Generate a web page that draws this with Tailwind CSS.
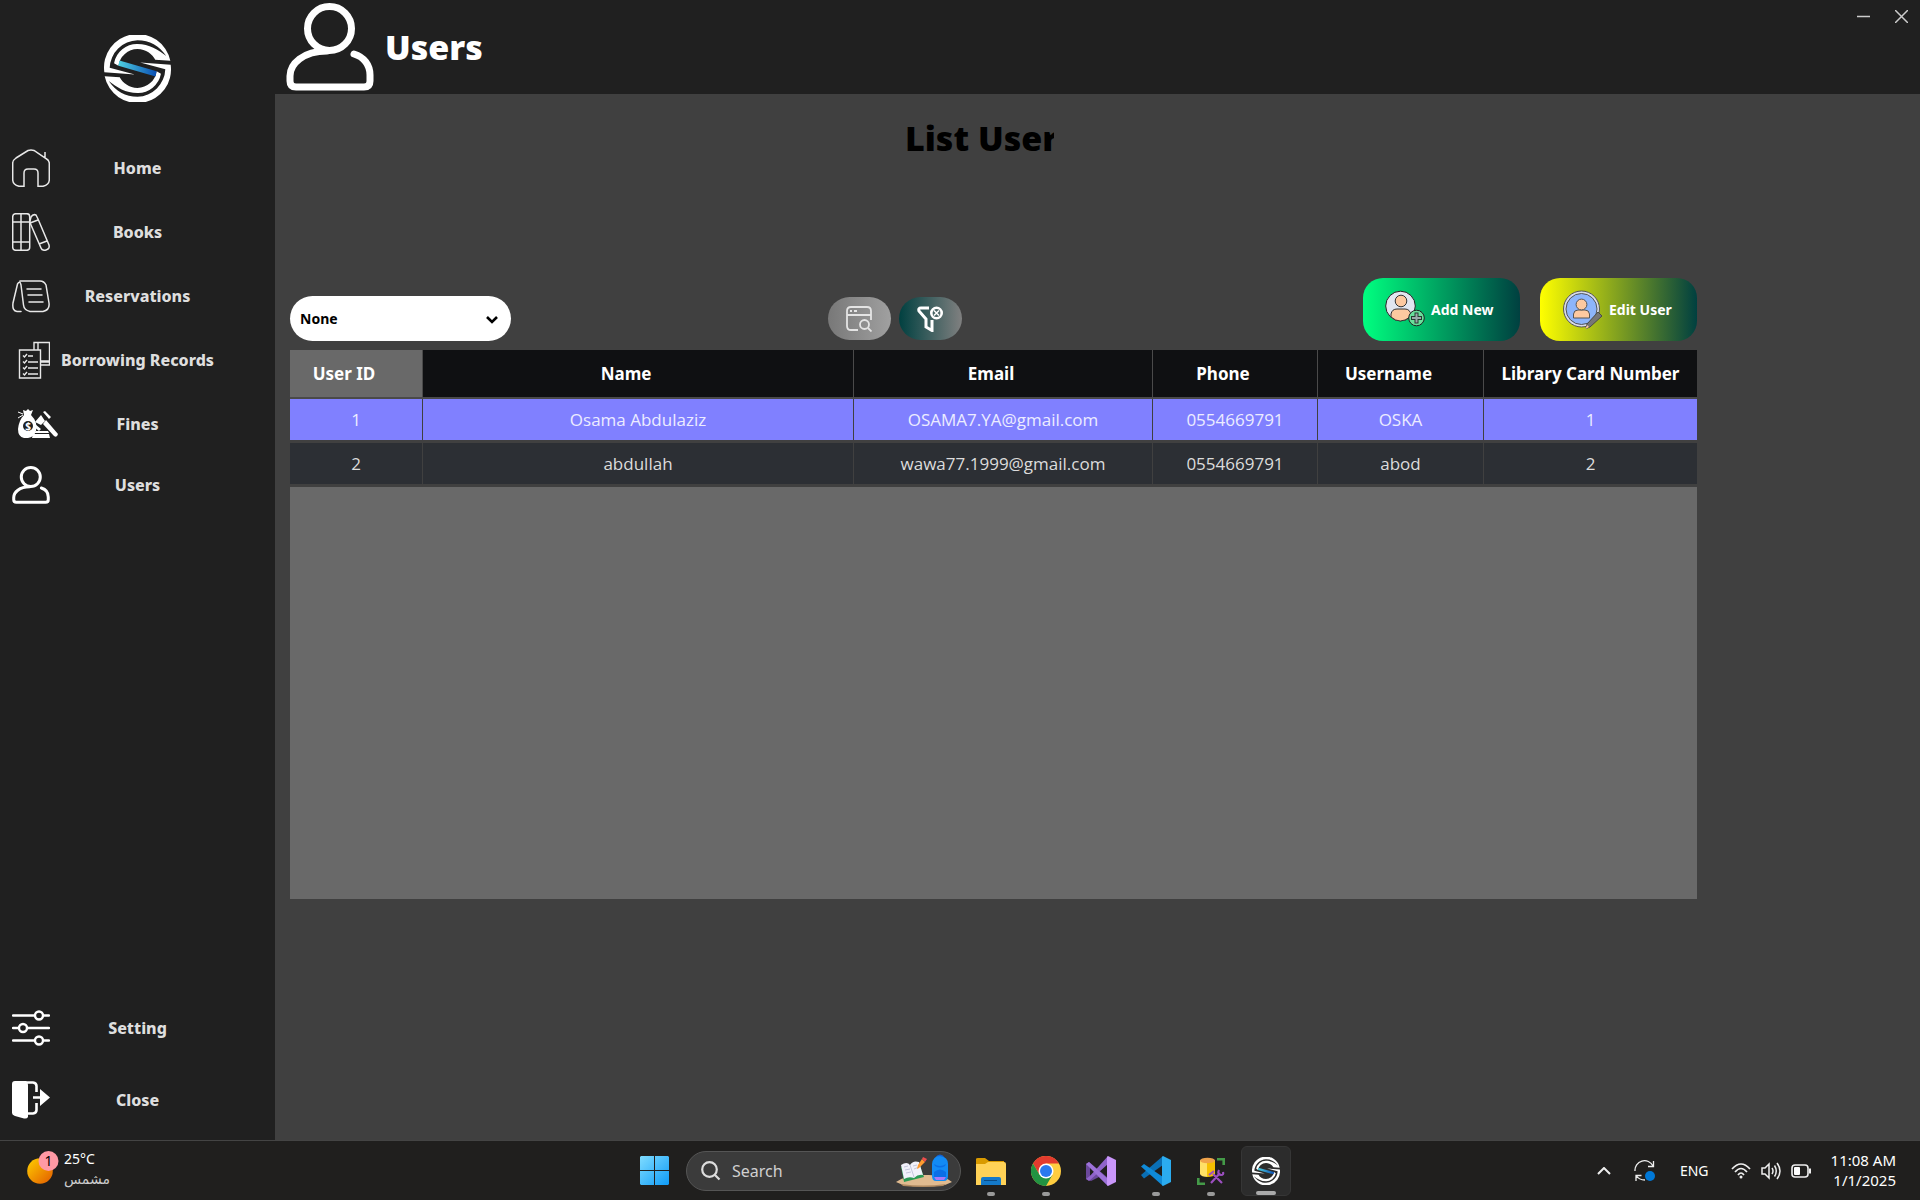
<!DOCTYPE html>
<html lang="en">
<head>
<meta charset="utf-8">
<title>Library - Users</title>
<script src="https://cdn.jsdelivr.net/npm/@tailwindcss/browser@4"></script>
</head>
<body class="flex min-h-screen flex-col bg-[#404040] font-['Noto_Sans','Open_Sans',sans-serif] text-white">

<svg class="absolute size-0" aria-hidden="true">
  <defs>
    <linearGradient id="band" x1="0" x2="1"><stop offset="0" stop-color="#4fd0e0"/><stop offset="1" stop-color="#0a4fb5"/></linearGradient>
    <path id="half" d="M1 111A100 100 0 0 1 198 77L153 74C145 58 125 42 100 42A58 58 0 0 0 43 92L30 84A70 70 0 0 1 100 27C135 27 162 44 186 63C165 33 136 16 100 16A85 85 0 0 0 17 98L92 118Z"/>
    <symbol id="logo" viewBox="0 0 200 200">
      <use href="#half" fill="#fff"/><use href="#half" fill="#fff" transform="rotate(180 100 100)"/>
      <path fill="url(#band)" d="M46 76L157 108L154 124L43 92Z"/>
    </symbol>
    <symbol id="user" viewBox="0 0 88 88">
      <g fill="none" stroke="#fff" stroke-width="7" stroke-linecap="round" stroke-linejoin="round"><circle cx="43.500" cy="25.500" r="22"/><path d="M41 48C17 48 4 61 4 73V78Q4 84 10 84H78Q84 84 84 78V72C84 62 78 54 68 51"/></g>
    </symbol>
  </defs>
</svg>

<div class="flex flex-1">
  <nav class="flex w-[275px] shrink-0 flex-col bg-[#202020] pb-1 text-[16px] font-extrabold text-[#dedede]">
    <div class="flex h-[136px] items-center justify-center"><svg class="size-[67px]"><use href="#logo"/></svg></div>

    <button class="grid h-16 grid-cols-[50px_1fr_50px] items-center">
      <svg class="ml-3 size-[38px]" viewBox="0 0 38 38" fill="none" stroke="#e8e8e8" stroke-width="1.500"><path d="M12 37.300H7Q1 36 .7 31V14Q1 11 4 9L16 1.500Q19 .3 22 1.500L34 9.500Q37 11 37.300 14V31Q37 36 31 37.300H26V24Q26 20 22 20H16Q12 20 12 24ZM33 9V3"/></svg>
      <span>Home</span>
    </button>
    <button class="grid h-16 grid-cols-[50px_1fr_50px] items-center">
      <svg class="ml-3 size-[38px]" viewBox="0 0 38 38" fill="none" stroke="#e8e8e8" stroke-width="1.500"><rect x=".7" y=".7" width="17" height="36.600" rx="3"/><path d="M9 1V37M1 9H17M1 29H17M19 4Q21 .7 24 2L26 6L37 32Q38 36 34 37Q30 38 29 35L17.700 9ZM18 10L26 7M27 31L35 28"/></svg>
      <span>Books</span>
    </button>
    <button class="grid h-16 grid-cols-[50px_1fr_50px] items-center">
      <svg class="ml-3 size-[38px]" viewBox="0 0 38 38" fill="none" stroke="#e8e8e8" stroke-width="1.500" stroke-linecap="round"><path d="M8 4H28Q32 4 34 8L37 26Q38 33 31 34.500H18Q12 33 11.500 28L9 8Q8 3 5.500 7L1 26Q0 34 5 34.500H9M15 12H29M16 18H30M17 25H31"/></svg>
      <span>Reservations</span>
    </button>
    <button class="grid h-16 grid-cols-[50px_1fr_50px] items-center">
      <svg class="ml-3 size-[38px]" viewBox="0 0 38 38" fill="none" stroke="#e8e8e8" stroke-width="1.400"><path d="M7.500 9H28.500V37H7.500ZM22 9V1.500H37.500V24H29M26 9V1.500M29 20H37.500M29 21H37M11 14.500L12.500 16L15 13M16 15H21M11 20.500L12.500 22L15 19M16 21H26M11 26.500L12.500 28L15 25M16 27H26M11 32.500L12.500 34L15 31M16 33H26"/></svg>
      <span class="whitespace-nowrap">Borrowing Records</span>
    </button>
    <button class="grid h-16 grid-cols-[50px_1fr_50px] items-center">
      <svg class="ml-4 h-[34px] w-[42px]" viewBox="0 0 42 34"><path fill="#fff" d="M7 3L10 4L12 2L14 4L17 3L15 8Q22 15 20 24Q18 30 12 31H8Q2 30 2 22Q3 13 8 8Z"/><path fill="none" stroke="#fff" d="M2 5L7 7M2 11L7 8"/><circle cx="12" cy="19" r="5" fill="#202020"/><text x="12" y="23" text-anchor="middle" font-size="10" font-weight="700" fill="#fff">$</text><path fill="#fff" d="M25 8L29 14L25 18L19 15ZM27 5L33 12L35 10L29 4ZM19 17L25 22L23 24L17 19ZM30 13L42 27Q41 31 38 29L27 17ZM20 24L32 24L33 26H18ZM17 27H33L34 31H16Z"/></svg>
      <span>Fines</span>
    </button>
    <button class="grid h-[58px] grid-cols-[50px_1fr_50px] items-center">
      <svg class="ml-3 size-[38px]"><use href="#user"/></svg>
      <span>Users</span>
    </button>

    <button class="mt-auto grid h-[72px] grid-cols-[50px_1fr_50px] items-center">
      <svg class="ml-3 size-[38px]" viewBox="0 0 38 38" fill="#202020" stroke="#fff" stroke-width="2.400" stroke-linecap="round"><path d="M1 6.500H37M1 19H37M1 31.500H37"/><circle cx="27" cy="6.500" r="4"/><circle cx="11" cy="19" r="4"/><circle cx="27" cy="31.500" r="4"/></svg>
      <span>Setting</span>
    </button>
    <button class="grid h-[72px] grid-cols-[50px_1fr_50px] items-center">
      <svg class="ml-3 size-[38px]" viewBox="0 0 38 38"><path fill="#fff" d="M3 0H14Q16 1 16 4V36Q15 38 12 37.500L3 35Q0 34 0 32V3Q0 0 3 0ZM28 8L38 16.500L28 25Z"/><path fill="none" stroke="#fff" stroke-width="2.600" d="M10 1.500H21Q24.500 2 24.500 5V11M24.500 22V29Q24.500 32 21 32.500H16M21 16.500H29"/></svg>
      <span>Close</span>
    </button>
  </nav>

  <div class="flex flex-1 flex-col">
    <header class="flex h-[94px] items-start justify-between bg-[#202020] pl-[11px]">
      <div class="flex items-center gap-[11px] pt-[3px]">
        <svg class="size-[88px]"><use href="#user"/></svg>
        <h1 class="text-[34px] leading-10 font-black">Users</h1>
      </div>
      <div class="flex">
        <button aria-label="Minimize" class="grid h-8 w-[38px] place-items-center"><svg class="size-[13px]" viewBox="0 0 13 13" stroke="#ccc" stroke-width="1.500"><path d="M0 6.500H13"/></svg></button>
        <button aria-label="Close window" class="grid h-8 w-[38px] place-items-center"><svg class="size-[13px]" viewBox="0 0 13 13" stroke="#ccc" stroke-width="1.500"><path d="M0 0L13 13M13 0L0 13"/></svg></button>
      </div>
    </header>

    <main class="flex-1 pr-[223px] pl-[15px]">
      <h2 class="mx-auto mt-5 h-12 pr-7"><span class="mx-auto block w-[149px] overflow-hidden text-[34px] leading-[48px] font-black whitespace-nowrap text-black">List User</span></h2>

      <div class="mt-[116px] flex items-end justify-between">
        <div class="relative">
          <select aria-label="Filter by" class="block h-[45px] w-[221px] appearance-none rounded-full bg-white px-[10px] text-[14px] font-bold text-black"><option>None</option></select>
          <svg class="pointer-events-none absolute top-[20px] right-[13px] h-2 w-3" viewBox="0 0 12 8" fill="none" stroke="#000" stroke-width="2.600"><path d="M1 1L6 6L11 1"/></svg>
        </div>
        <div class="flex gap-2 pr-[85px] pb-px">
          <button aria-label="Search records" class="grid h-[43px] w-[63px] place-items-center rounded-full bg-linear-to-r/srgb from-[#787878] to-[#a0a0a0]">
            <svg class="size-[26px]" viewBox="0 0 26 26" fill="none" stroke="#e4e4e4" stroke-width="1.800"><path d="M12 24H5Q1 24 1 20V5Q1 1 5 1H21Q25 1 25 5V14M1 9H25M4 5H6M8 5H11"/><circle cx="18.500" cy="18.500" r="4.500"/><path d="M22 22L25.500 25.500"/></svg>
          </button>
          <button aria-label="Clear filter" class="grid h-[43px] w-[63px] place-items-center rounded-full bg-linear-to-r/srgb from-[#004040] to-[#808080]">
            <svg class="size-[26px]" viewBox="0 0 26 26" fill="none" stroke="#fff" stroke-width="3"><path d="M12 2H4Q1 2 2 5L9 13V21L15 24.500V14"/><circle cx="19.500" cy="7" r="5.200" stroke-width="2.600"/><path stroke-width="1.500" d="M17 4.500L22 9.500M22 4.500L17 9.500"/></svg>
          </button>
        </div>
        <div class="flex gap-5 text-[14px] font-bold">
          <button class="flex h-[63px] w-[157px] items-center gap-[6px] rounded-[20px] bg-linear-to-r/srgb from-[#00ff80] to-[#004040] pl-[22px]">
            <svg class="size-10" viewBox="0 0 40 40"><circle cx="15.500" cy="16" r="14.800" fill="#e1e6f0" stroke="#222"/><path fill="#fdc9a0" stroke="#333" d="M6 27V24Q7 19 12 19H20Q25 19 26 25L25 27Q15 35 6 27Z"/><circle cx="16" cy="11" r="5.800" fill="#fdc9a0" stroke="#333"/><circle cx="31.500" cy="28" r="7.800" fill="#68df9a" stroke="#222"/><path stroke="#263b30" stroke-width="4" d="M31.500 22.500V33.500M26 28H37"/><path stroke="#9aa" stroke-width="2" d="M31.500 23.500V32.500M27 28H36"/></svg>
            Add New
          </button>
          <button class="flex h-[63px] w-[157px] items-center gap-[6px] rounded-[20px] bg-linear-to-r/srgb from-[#ffff00] to-[#004040] pl-[23px]">
            <svg class="size-10" viewBox="0 0 40 40"><circle cx="18.500" cy="19" r="18" fill="#d8dce8" stroke="#555"/><circle cx="18.500" cy="19" r="15.500" fill="#8db5fb" stroke="#555"/><path fill="#fdc9a0" stroke="#555" d="M10.500 28V24Q11 20 15 20H22Q26 20 26.500 24V28Z"/><circle cx="18.500" cy="14.500" r="5.400" fill="#fdc9a0" stroke="#555"/><path fill="#777" stroke="#4a4a4a" d="M35 22L39 26L27 37L23 38.500L24 34Z"/><path fill="#fdc9a0" d="M24 35L26 37L22.500 39Z"/></svg>
            Edit User
          </button>
        </div>
      </div>

      <div class="mt-[9px] h-[549px] bg-[#696969]">
        <table class="w-full table-fixed border-separate border-spacing-0 text-center text-[17px]">
          <colgroup><col class="w-[133px]"><col><col class="w-[299px]"><col class="w-[165px]"><col class="w-[166px]"><col class="w-[213px]"></colgroup>
          <thead>
            <tr class="h-[49px] bg-[#0f1012]">
              <th class="border-r border-b-2 border-[#4a4a4a] bg-[#696969] pr-6 font-bold">User ID</th>
              <th class="border-r border-b-2 border-[#4a4a4a] pr-6 font-bold">Name</th>
              <th class="border-r border-b-2 border-[#4a4a4a] pr-6 font-bold">Email</th>
              <th class="border-r border-b-2 border-[#4a4a4a] pr-6 font-bold">Phone</th>
              <th class="border-r border-b-2 border-[#4a4a4a] pr-6 font-bold">Username</th>
              <th class="border-b-2 border-[#4a4a4a] font-bold whitespace-nowrap">Library Card Number</th>
            </tr>
          </thead>
          <tbody class="font-['Open_Sans','Noto_Sans',sans-serif]">
            <tr class="h-11 bg-[#8080ff] text-[#ececff]">
              <td class="border-r border-b-3 border-[#404040]">1</td><td class="border-r border-b-3 border-[#404040]">Osama Abdulaziz</td><td class="border-r border-b-3 border-[#404040]">OSAMA7.YA@gmail.com</td><td class="border-r border-b-3 border-[#404040]">0554669791</td><td class="border-r border-b-3 border-[#404040]">OSKA</td><td class="border-b-3 border-[#404040]">1</td>
            </tr>
            <tr class="h-11 bg-[#2c2f34] text-[#dcdcdc]">
              <td class="border-r border-b-3 border-[#404040]">2</td><td class="border-r border-b-3 border-[#404040]">abdullah</td><td class="border-r border-b-3 border-[#404040]">wawa77.1999@gmail.com</td><td class="border-r border-b-3 border-[#404040]">0554669791</td><td class="border-r border-b-3 border-[#404040]">abod</td><td class="border-b-3 border-[#404040]">2</td>
            </tr>
          </tbody>
        </table>
      </div>
    </main>
  </div>
</div>

<footer class="grid h-[60px] grid-cols-[1fr_auto_1fr] items-center border-t border-[#444] bg-[#201f1e]">
  <button class="flex items-center gap-[5px] justify-self-start pb-1 pl-[27px] text-left">
    <svg class="h-9 w-8" viewBox="0 0 32 36"><defs><linearGradient id="sun" x1="0" y1="0" x2="1" y2="1"><stop offset="0" stop-color="#ffd000"/><stop offset="1" stop-color="#e25a00"/></linearGradient></defs><circle cx="13" cy="20" r="12.800" fill="url(#sun)"/><circle cx="21.500" cy="10" r="10" fill="#ff99a4"/><text x="21.500" y="15" text-anchor="middle" font-size="14" fill="#000">1</text></svg>
    <span class="flex flex-col"><span class="text-[14px] leading-5">25°C</span><span lang="ar" class="font-['DejaVu_Sans',sans-serif] text-[14px] leading-5 text-[#ccc]">مشمس</span></span>
  </button>

  <div class="flex items-center gap-[5px]">
    <button aria-label="Start" class="grid size-[50px] place-items-center"><svg class="size-[29px]" viewBox="0 0 29 29"><defs><linearGradient id="win" x1="0" y1="0" x2="1" y2="1" gradientUnits="objectBoundingBox"><stop offset="0" stop-color="#7fdcff"/><stop offset="1" stop-color="#0f9bf7"/></linearGradient></defs><path fill="url(#win)" d="M1 0H14V14H0V1ZM15 0H28L29 1V14H15ZM0 15H14V29H1L0 28ZM15 15H29V28L28 29H15Z"/></svg></button>
    <label class="ml-[2px] flex h-10 w-[275px] items-center rounded-full border border-[#555] bg-[#3b3b3b] pr-[7px] pl-[14px]">
      <svg class="size-5 shrink-0" viewBox="0 0 20 20" fill="none" stroke="#ddd" stroke-width="2.200"><circle cx="8.500" cy="8.500" r="7.300"/><path d="M13.500 13.500L18.500 18.500"/></svg>
      <input type="text" aria-label="Search" placeholder="Search" class="ml-[11px] w-full min-w-0 bg-transparent text-[16px] placeholder:text-[#d0d0d0] placeholder:opacity-100">
      <svg class="h-[34px] w-[58px] shrink-0" viewBox="0 0 58 34"><path fill="#e0bb90" d="M1 28Q12 20 30 21Q48 20 57 28L50 31Q28 34 8 31Z"/><path fill="#b08a60" d="M6 30Q28 33 51 30L48 32Q28 34 8 32Z"/><path fill="#2b9a54" d="M6 13L24 9L29 23L9 28Z"/><path fill="#f1f1fa" d="M6 11Q12 7 15 11Q18 6 24 8L28 21Q23 20 19 24Q14 22 9 25Z"/><path stroke="#c4c6dc" d="M15 11L19 23M9 13L13 12M10 16L15 15M11 19L16 18M18 12L22 11M19 15L24 13"/><path fill="#ff9b2f" d="M27 5L30 8L24 14L22 15L23 11Z"/><path fill="#ef4d4d" d="M28 3L32 5L30 8L27 5Z"/><path fill="none" stroke="#1262d6" stroke-width="2" d="M41 4Q45 -1 49 4"/><path fill="#128bf5" d="M37 10Q38 2 45 2Q53 3 53 10V22Q53 27 49 27H41Q37 27 37 22Z"/><path fill="#0a6ee6" d="M39 18Q45 13 51 18V24H39ZM39 10Q45 14 51 10L50 12Q45 15 40 12Z"/><path fill="#a678f5" d="M39 23H51L49 26H41Z"/></svg>
    </label>
    <button aria-label="File Explorer" class="relative grid size-[50px] place-items-center"><svg class="h-7 w-[30px]" viewBox="0 0 30 28"><path fill="#d99a00" d="M0 2Q0 1 2 1H9L13 4H28V10H0Z"/><path fill="#ffd257" d="M0 7H9L12 5H28Q30 5 30 7V28H0Z"/><path fill="#1479c9" d="M5 28V22Q5 20 7 20H23Q25 20 25 22V28Z"/><path stroke="#0a4a84" d="M8 23.500H21"/></svg><span class="absolute bottom-0 h-1 w-2 rounded-full bg-[#9a9a9a]"></span></button>
    <button aria-label="Chrome" class="relative grid size-[50px] place-items-center"><svg class="size-[30px]" viewBox="0 0 30 30"><circle cx="15" cy="15" r="15" fill="#ffcd40"/><path fill="#e33b2e" d="M2 7.500A15 15 0 0 1 28 7.500H15L8.500 18.700Z"/><path fill="#229342" d="M2 7.500L8.500 18.700L15 22.500H16L15 30A15 15 0 0 1 2 7.500Z"/><path fill="#229342" d="M15 30L21.500 18.700L15 22L8 18Z"/><circle cx="15" cy="15" r="7.500" fill="#fff"/><circle cx="15" cy="15" r="6" fill="#2a79ee"/></svg><span class="absolute bottom-0 h-1 w-2 rounded-full bg-[#9a9a9a]"></span></button>
    <button aria-label="Visual Studio" class="relative grid size-[50px] place-items-center"><svg class="size-[30px]" viewBox="0 0 30 30"><path fill="#6b489c" d="M0 8L3 6L22 22V30L13 21L5 25L0 23Z"/><path fill="#202020" d="M4 11V20L8.500 15.500Z"/><path fill="#8f63c9" d="M3 25L22 8V0L5 19L0 23Z"/><path fill="#9d72d8" d="M3 6L22 23V30L0 8Z"/><path fill="#c996fa" d="M22 0L30 4V26L22 30L21 29V1Z"/></svg></button>
    <button aria-label="Visual Studio Code" class="relative grid size-[50px] place-items-center"><svg class="size-[30px]" viewBox="0 0 30 30"><path fill="#0a6fb5" d="M0 19L22 0V9L3 22.500Z"/><path fill="#0f8ad8" d="M0 10.500L3 8L22 21V30Z"/><path fill="#2bacf0" d="M22 0L30 4V26L22 30L21 29V1Z"/></svg><span class="absolute bottom-0 h-1 w-2 rounded-full bg-[#9a9a9a]"></span></button>
    <button aria-label="SQL Server Management Studio" class="relative grid size-[50px] place-items-center"><svg class="size-7" viewBox="0 0 28 28"><path fill="#ffe066" d="M3 3H11V20Q4 20 3 17Z"/><path fill="#f6bf00" d="M10 3H18V17Q17 20 10 20Z"/><ellipse cx="10.500" cy="3.500" rx="7.500" ry="2.800" fill="#f0a34a"/><path fill="none" stroke="#449a48" stroke-width="2.600" d="M20 2.300H26.700V8M1.300 21V26.700H8"/><path fill="none" stroke="#9c4fc0" stroke-width="2.200" d="M14 26L23 16M25 26L16 17M12 18L17 14M22 13Q20 17 24 18Q27 18 26 15"/></svg><span class="absolute bottom-0 h-1 w-2 rounded-full bg-[#9a9a9a]"></span></button>
    <button aria-label="Library" class="relative grid size-[50px] place-items-center rounded-md border border-[#363636] bg-[#2c2c2c]"><svg class="size-7"><use href="#logo"/></svg><span class="absolute bottom-0 h-1 w-5 rounded-full bg-[#aaa]"></span></button>
  </div>

  <div class="flex items-center justify-self-end pr-6 text-[14px]">
    <button aria-label="Hidden icons"><svg class="h-2 w-[14px]" viewBox="0 0 14 8" fill="none" stroke="#eee" stroke-width="2"><path d="M1 7L7 1L13 7"/></svg></button>
    <button aria-label="Updates" class="ml-[23px]"><svg class="size-[22px]" viewBox="0 0 22 22" fill="none" stroke="#eee" stroke-width="1.300"><path d="M1 11A9.500 9.500 0 0 1 19 6M19.500 1V6.500H14M2 21V15.500H7.500M2 15.500Q5 20 11 20"/><circle cx="16" cy="16" r="5" fill="#0078d7" stroke="none"/></svg></button>
    <span class="ml-6">ENG</span>
    <button aria-label="Network, sound and battery" class="ml-[22px] flex items-center gap-[10px]">
      <svg class="h-4 w-5" viewBox="0 0 20 16" fill="none" stroke="#eee" stroke-width="1.700"><path d="M1 6Q10 -4 19 6M4 9Q10 2 16 9M7 12Q10 8 13 12"/><circle cx="10" cy="14" r="1.500" fill="#eee" stroke="none"/></svg>
      <svg class="h-[18px] w-5" viewBox="0 0 20 18" fill="none" stroke="#eee" stroke-width="1.500"><path d="M1 6H4L8 2V16L4 12H1ZM11 6Q13 9 11 12M13.500 3.500Q17 9 13.500 14.500M16 1Q22 9 16 17"/></svg>
      <svg class="h-[14px] w-5" viewBox="0 0 20 14"><rect x="1" y="1" width="16" height="12" rx="3" fill="none" stroke="#eee" stroke-width="1.600"/><rect x="3" y="3" width="6" height="8" rx="1" fill="#fff"/><path stroke="#eee" stroke-width="2" d="M19 4.500V9.500"/></svg>
    </button>
    <button class="ml-5 flex flex-col pb-[2px] text-right text-[15px] leading-5"><span class="w-full">11:08 AM</span><span class="w-full">1/1/2025</span></button>
  </div>
</footer>
</body>
</html>
